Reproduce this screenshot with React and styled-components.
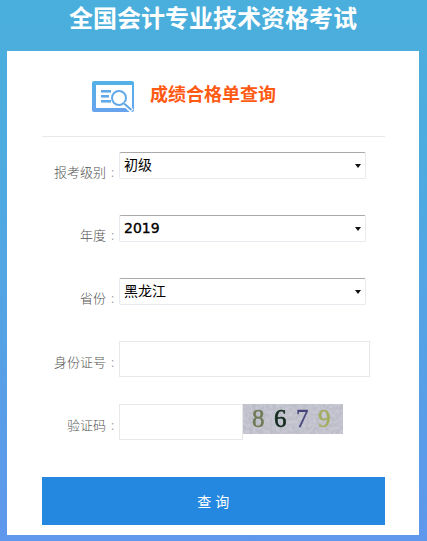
import React from "react";
import styled, { createGlobalStyle } from "styled-components";

const Global = createGlobalStyle`
  html, body { margin: 0; padding: 0; }
  body {
    font-family: "Noto Sans CJK SC", "Liberation Sans", sans-serif;
    background: #5f97ec;
  }
`;

const Page = styled.div`
  box-sizing: border-box;
  width: 427px;
  height: 541px;
  overflow: hidden;
  padding: 0 8px 6px 7px;
  background: linear-gradient(180deg, #4aafdc 0%, #4dabe0 30%, #5f97ec 100%);
`;

const Title = styled.h1`
  margin: 0;
  height: 51px;
  font-size: 24px;
  line-height: 33px;
  font-weight: 700;
  color: #fff;
  text-align: center;
`;

const Card = styled.main`
  box-sizing: border-box;
  height: 484px;
  background: #fff;
  padding: 0 34px 0 35px;
`;

const Heading = styled.header`
  display: flex;
  align-items: center;
  height: 85px;
  padding: 0 0 0 50px;
  border-bottom: 1px solid #e8e8e8;
`;

const HeadingIcon = styled.svg`
  display: block;
  flex: none;
  width: 42px;
  height: 32px;
  margin-top: 6px;
`;

const HeadingText = styled.h2`
  margin: 0 0 1px 16px;
  font-size: 18px;
  line-height: 24px;
  font-weight: 700;
  color: #ff5a14;
`;

const Form = styled.form`
  display: flex;
  flex-direction: column;
  padding-top: 15px;
`;

const Row = styled.div`
  display: flex;
  align-items: flex-start;
  height: ${(p) => p.$h}px;
`;

const Label = styled.label`
  box-sizing: border-box;
  flex: none;
  width: 77px;
  padding-top: ${(p) => p.$top}px;
  font-size: 13px;
  line-height: 18px;
  font-weight: 300;
  color: #555;
  text-align: right;
  white-space: nowrap;
`;

const Colon = styled.span`
  display: inline-block;
  width: 13px;
  color: #999;
  text-align: center;
`;

const SelectWrap = styled.div`
  position: relative;
  width: 247px;
  height: 27px;

  &::after {
    content: "";
    position: absolute;
    right: 5px;
    top: 12px;
    border-style: solid;
    border-width: 4px 3.5px 0;
    border-color: #111 transparent transparent;
    pointer-events: none;
  }
`;

const Select = styled.select`
  appearance: none;
  display: block;
  box-sizing: border-box;
  width: 100%;
  height: 27px;
  margin: 0;
  padding: 0 0 2px 4px;
  border: 1px solid #e6e9ee;
  border-top-color: #aaa;
  border-radius: 2px;
  background: #fff;
  font-family: "DejaVu Sans", "Noto Sans CJK SC", sans-serif;
  font-size: 14px;
  font-weight: 400;
  color: #000;
  -webkit-text-stroke: ${(p) => (p.$strong ? "0.35px #000" : "0")};
`;

const Input = styled.input`
  box-sizing: border-box;
  width: ${(p) => p.$w}px;
  height: 36px;
  margin: 0;
  padding: 0 6px;
  border: 1px solid #e8e8e8;
  background: #fff;
  outline: none;
`;

const Captcha = styled.svg`
  display: block;
  flex: none;
  width: 100px;
  height: 30px;
`;

const Submit = styled.button`
  display: block;
  box-sizing: border-box;
  width: 343px;
  height: 48px;
  margin: 0;
  padding: 0 0 1px;
  border: 0;
  background: #2487e0;
  color: #fff;
  font-family: inherit;
  font-size: 14px;
  letter-spacing: 0.5px;
  text-align: center;
`;

const ResultIcon = () => (
  <HeadingIcon viewBox="0 0 42 32" aria-hidden="true">
    <defs>
      <linearGradient id="ig" x1="0" y1="0" x2="0" y2="1">
        <stop offset="0" stopColor="#53b1e6" />
        <stop offset="1" stopColor="#69a3ee" />
      </linearGradient>
    </defs>
    <rect x="0" y="0" width="42" height="31" rx="2" fill="url(#ig)" />
    <rect x="4" y="4" width="36" height="23" fill="#fff" />
    <rect x="9" y="9" width="10" height="2.6" fill="#62a9e9" />
    <rect x="9" y="14" width="8" height="2.6" fill="#62a9e9" />
    <rect x="9" y="19" width="10" height="2.6" fill="#62a9e9" />
    <circle cx="27" cy="17" r="7" fill="#fff" stroke="#62a9e9" strokeWidth="2" />
    <path d="M32 22.5 L40 30" stroke="#fff" strokeWidth="4.5" />
    <path d="M32 22.5 L39.5 29" stroke="#62a9e9" strokeWidth="2.2" />
  </HeadingIcon>
);

const CaptchaImage = () => (
  <Captcha viewBox="0 0 100 30" role="img" aria-label="8679">
    <defs>
      <filter id="noise" x="0" y="0" width="100%" height="100%">
        <feTurbulence type="fractalNoise" baseFrequency="0.3" numOctaves="3" seed="4" />
        <feColorMatrix type="matrix" values="0 0 0 0 0.5  0 0 0 0 0.5  0 0 0 0 0.57  2.4 0 0 0 -0.7" />
      </filter>
      <filter id="soft"><feGaussianBlur stdDeviation="0.45" /></filter>
    </defs>
    <rect width="100" height="30" fill="#c9c9d5" />
    <rect width="100" height="30" filter="url(#noise)" />
    <g filter="url(#soft)" fontFamily="'Liberation Serif', serif" fontSize="25">
      <text x="9" y="23" fill="#6f7a55" stroke="#6f7a55" strokeWidth="0.5">8</text>
      <text x="31" y="23" fill="#12291c" stroke="#12291c" strokeWidth="0.6">6</text>
      <text x="53" y="23" fill="#45457a" stroke="#45457a" strokeWidth="0.4">7</text>
      <text x="75" y="23" fill="#a3ac5c" stroke="#a3ac5c" strokeWidth="0.5">9</text>
    </g>
  </Captcha>
);

export default function App() {
  return (
    <Page>
      <Global />
      <Title>全国会计专业技术资格考试</Title>
      <Card>
        <Heading>
          <ResultIcon />
          <HeadingText>成绩合格单查询</HeadingText>
        </Heading>
        <Form onSubmit={(e) => e.preventDefault()}>
          <Row $h={63}>
            <Label $top={11}>报考级别<Colon>:</Colon></Label>
            <SelectWrap>
              <Select defaultValue="初级"><option>初级</option><option>中级</option></Select>
            </SelectWrap>
          </Row>
          <Row $h={63}>
            <Label $top={11}>年度<Colon>:</Colon></Label>
            <SelectWrap>
              <Select $strong defaultValue="2019"><option>2019</option><option>2018</option></Select>
            </SelectWrap>
          </Row>
          <Row $h={63}>
            <Label $top={11}>省份<Colon>:</Colon></Label>
            <SelectWrap>
              <Select defaultValue="黑龙江"><option>黑龙江</option><option>北京</option></Select>
            </SelectWrap>
          </Row>
          <Row $h={63}>
            <Label $top={12}>身份证号<Colon>:</Colon></Label>
            <Input $w={251} />
          </Row>
          <Row $h={73}>
            <Label $top={12}>验证码<Colon>:</Colon></Label>
            <Input $w={124} />
            <CaptchaImage />
          </Row>
          <Submit type="submit">查 询</Submit>
        </Form>
      </Card>
    </Page>
  );
}
